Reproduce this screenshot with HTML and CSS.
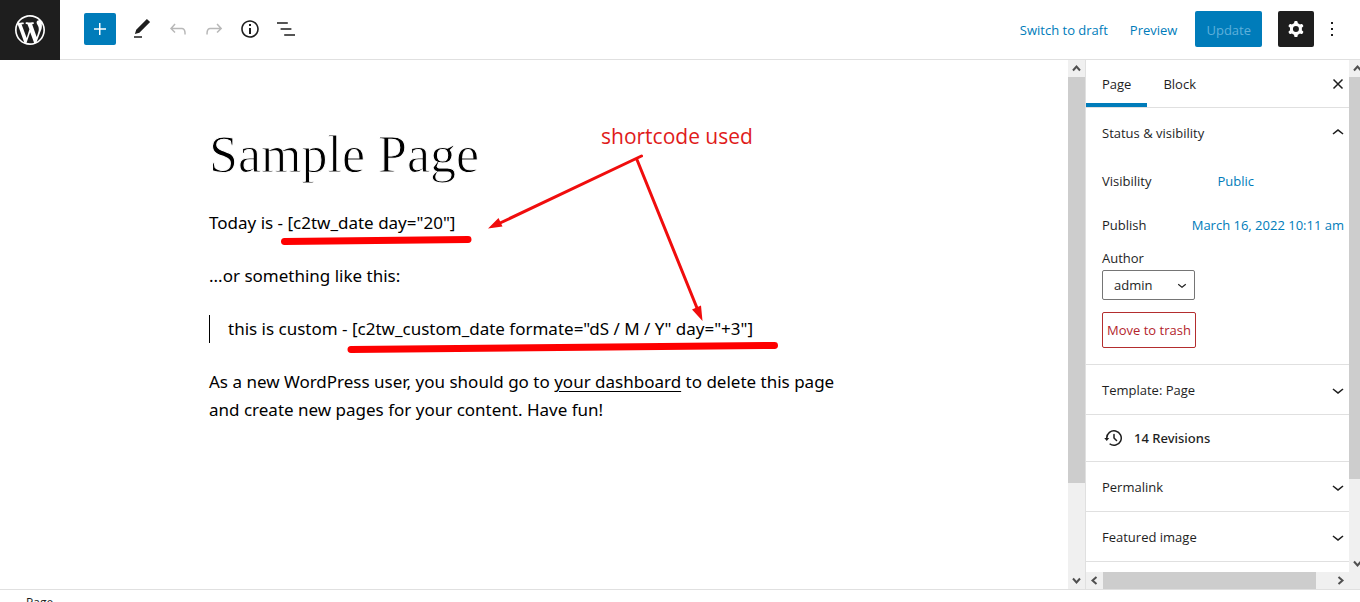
FILE: index.html
```html
<!DOCTYPE html>
<html lang="en">
<head>
<meta charset="utf-8">
<title>Edit Page</title>
<link rel="stylesheet" href="styles.css">
</head>
<body>
<div class="app">
  <header class="topbar">
    <a class="logo" href="#" aria-label="View pages"><svg width="36" height="36" viewBox="-2 -2 24 24"><path d="M20 10c0-5.51-4.49-10-10-10C4.48 0 0 4.49 0 10c0 5.52 4.48 10 10 10 5.51 0 10-4.48 10-10zM7.78 15.37L4.37 6.22c.55-.02 1.17-.08 1.17-.08.5-.06.44-1.13-.06-1.11 0 0-1.45.11-2.37.11-.18 0-.37 0-.58-.01C4.12 2.69 6.87 1.11 10 1.11c2.33 0 4.45.87 6.05 2.34-.68-.11-1.65.39-1.65 1.58 0 .74.45 1.36.9 2.1.35.61.55 1.36.55 2.46 0 1.49-1.4 5-1.4 5l-3.03-8.37c.54-.02.82-.17.82-.17.5-.05.44-1.25-.06-1.22 0 0-1.44.12-2.38.12-.87 0-2.33-.12-2.33-.12-.5-.03-.56 1.2-.06 1.22l.92.08 1.26 3.41zM17.41 10c.24-.64.74-1.87.43-4.25.7 1.29 1.05 2.71 1.05 4.25 0 3.29-1.73 6.24-4.4 7.78.97-2.59 1.94-5.2 2.92-7.78zM6.1 18.09C3.12 16.65 1.11 13.53 1.11 10c0-1.3.23-2.48.72-3.59C3.25 10.3 4.67 14.2 6.1 18.09zm4.03-6.63l2.58 6.98c-.86.29-1.76.45-2.71.45-.79 0-1.57-.11-2.29-.33.81-2.38 1.62-4.74 2.42-7.1z"/></svg></a>
    <div class="tools">
      <button class="tool tool-add" aria-label="Add block"><svg width="24" height="24" viewBox="0 0 24 24"><path d="M11 6h1.500v5.250H18v1.500h-5.500V18H11v-5.250H6v-1.500h5z"/></svg></button>
      <button class="tool" aria-label="Tools"><svg width="24" height="24" viewBox="0 0 24 24"><path d="M20.100 5.100L16.900 2 6.200 12.700l-1.300 4.400 4.500-1.300L20.100 5.100zM4 20.800h8v-1.500H4v1.500z"/></svg></button>
      <button class="tool tool-off" aria-label="Undo"><svg width="24" height="24" viewBox="0 0 24 24"><path d="M18.300 11.700c-.6-.6-1.400-.9-2.300-.9H6.700l2.900-3.300-1.100-1-4.500 5L8.500 16l1-1-2.700-2.700H16c.5 0 .9.2 1.300.5 1 1 1 3.400 1 4.500v.3h1.500v-.2c0-1.500 0-4.300-1.500-5.700z"/></svg></button>
      <button class="tool tool-off" aria-label="Redo"><svg width="24" height="24" viewBox="0 0 24 24"><path d="M15.600 6.500l-1.100 1 2.900 3.300H8c-.9 0-1.700.3-2.300.9-1.400 1.500-1.400 4.200-1.400 5.600v.2h1.500v-.3c0-1.100 0-3.500 1-4.500.3-.3.7-.5 1.300-.5h9.200L14.500 15l1.100 1.100 4.600-4.600-4.600-5z"/></svg></button>
      <button class="tool" aria-label="Details"><svg width="24" height="24" viewBox="0 0 24 24"><path d="M12 3.200c-4.800 0-8.800 3.900-8.800 8.800 0 4.800 3.900 8.800 8.800 8.800 4.800 0 8.800-3.900 8.800-8.800 0-4.800-4-8.800-8.800-8.800zm0 16c-4 0-7.200-3.300-7.200-7.200C4.800 8 8 4.800 12 4.800s7.200 3.300 7.200 7.200c0 4-3.200 7.200-7.200 7.200zM11 17h2v-6h-2v6zm0-8h2V7h-2v2z"/></svg></button>
      <button class="tool" aria-label="List view"><svg width="24" height="24" viewBox="0 0 24 24"><path d="M13.800 5.200H3v1.500h10.800V5.200zm-3.600 12v1.500H21v-1.500H10.200zm7.200-6H6.600v1.500h10.800v-1.500z"/></svg></button>
    </div>
    <div class="actions">
      <button class="text-action">Switch to draft</button>
      <button class="text-action">Preview</button>
      <button class="update">Update</button>
      <button class="settings" aria-label="Settings"><svg width="24" height="24" viewBox="0 0 24 24"><path fill-rule="evenodd" d="M10.289 4.836A1 1 0 0111.275 4h1.306a1 1 0 01.987.836l.244 1.466c.787.26 1.503.679 2.108 1.218l1.393-.522a1 1 0 011.216.437l.653 1.130a1 1 0 01-.23 1.273l-1.148.944a6.025 6.025 0 010 2.435l1.149.946a1 1 0 01.23 1.272l-.653 1.130a1 1 0 01-1.216.437l-1.394-.522c-.605.54-1.320.958-2.108 1.218l-.244 1.466a1 1 0 01-.987.836h-1.306a1 1 0 01-.986-.836l-.244-1.466a5.995 5.995 0 01-2.108-1.218l-1.394.522a1 1 0 01-1.217-.436l-.653-1.131a1 1 0 01.23-1.272l1.149-.946a6.026 6.026 0 010-2.435l-1.148-.944a1 1 0 01-.23-1.272l.653-1.131a1 1 0 011.217-.437l1.393.522a5.994 5.994 0 012.108-1.218l.244-1.466zM14.929 12a3 3 0 11-6 0 3 3 0 016 0z"/></svg></button>
      <button class="more" aria-label="Options"><svg width="24" height="24" viewBox="0 0 24 24"><path d="M13 19h-2v-2h2v2zm0-6h-2v-2h2v2zm0-6h-2V5h2v2z"/></svg></button>
    </div>
  </header>

  <div class="workspace">
    <main class="canvas">
      <article class="post">
        <h1>Sample Page</h1>
        <p>Today is - [c2tw_date day="20"]</p>
        <p>...or something like this:</p>
        <blockquote>this is custom - [c2tw_custom_date formate="dS / M / Y" day="+3"]</blockquote>
        <p>As a new WordPress user, you should go to <a href="#">your dashboard</a> to delete this page and create new pages for your content. Have fun!</p>
        <svg class="marks" width="650" height="360" viewBox="0 0 650 360" aria-hidden="true">
          <g fill="none" stroke="#fe0000" stroke-linecap="round">
            <path stroke-width="7" d="M75.500 181.500L259 179.500M142 289.500L565.500 285.500"/>
            <path stroke="#f00d0d" stroke-width="3" d="M432.500 96L290 163.500M427.500 98.500L488 248"/>
          </g>
          <path fill="#f00d0d" d="M279 168.500l10.500-10.500 4 8.500zM493.500 261l-10.500-11.500 9-4z"/>
        </svg>
        <span class="note">shortcode used</span>
      </article>
    </main>
    <div class="vscroll" aria-hidden="true">
      <svg width="17" height="17" viewBox="0 0 17 17"><path d="M5 10.500l3.500-4 3.500 4"/></svg>
      <div class="track"><div class="thumb thumb-canvas"></div></div>
      <svg width="17" height="17" viewBox="0 0 17 17"><path d="M5 6.500l3.500 4 3.500-4"/></svg>
    </div>
    <aside class="sidebar">
      <div class="sidebar-main">
        <div class="panels">
          <div class="tabs">
            <button class="tab tab-on">Page</button>
            <button class="tab">Block</button>
            <button class="close" aria-label="Close settings"><svg width="12" height="12" viewBox="0 0 12 12"><path d="M1.500 1.500l9 9M10.500 1.500l-9 9"/></svg></button>
          </div>
          <section class="status">
            <button class="row-toggle">Status &amp; visibility<svg width="24" height="24" viewBox="0 0 24 24"><path d="M6.500 12.400L12 8l5.500 4.400-.9 1.200L12 10l-4.500 3.600-1-1.200z"/></svg></button>
            <div class="field"><span>Visibility</span><a class="public" href="#">Public</a></div>
            <div class="field"><span>Publish</span><a href="#">March 16, 2022 10:11 am</a></div>
            <div class="author">
              <label for="author">Author</label>
              <div class="select-wrap">
                <select id="author"><option>admin</option></select>
                <svg width="18" height="18" viewBox="0 0 24 24"><path d="M17.500 11.600L12 16l-5.500-4.400.9-1.200L12 14l4.500-3.600 1 1.200z"/></svg>
              </div>
            </div>
            <button class="trash">Move to trash</button>
          </section>
          <button class="row">Template: Page<svg width="24" height="24" viewBox="0 0 24 24"><path d="M17.500 11.600L12 16l-5.500-4.400.9-1.200L12 14l4.500-3.600 1 1.200z"/></svg></button>
          <a class="revisions" href="#"><svg width="24" height="24" viewBox="0 0 24 24"><path d="M5.500 12h1.750l-2.500 3-2.500-3H4a8 8 0 113.134 6.350l.907-1.194A6.500 6.500 0 105.500 12zm9.530 1.970l-2.280-2.280V8.500a.75.75 0 00-1.500 0V12a.747.747 0 00.218.529l1.282-.84-1.280.842 2.500 2.500a.75.75 0 101.060-1.061z"/></svg>14 Revisions</a>
          <button class="row">Permalink<svg width="24" height="24" viewBox="0 0 24 24"><path d="M17.500 11.600L12 16l-5.500-4.400.9-1.200L12 14l4.500-3.600 1 1.200z"/></svg></button>
          <button class="row">Featured image<svg width="24" height="24" viewBox="0 0 24 24"><path d="M17.500 11.600L12 16l-5.500-4.400.9-1.200L12 14l4.500-3.600 1 1.200z"/></svg></button>
        </div>
        <div class="edge">
          <div class="vscroll" aria-hidden="true">
            <svg width="17" height="17" viewBox="0 0 17 17"><path d="M5 10.500l3.500-4 3.500 4"/></svg>
            <div class="track"><div class="thumb thumb-side"></div></div>
            <svg width="17" height="17" viewBox="0 0 17 17"><path d="M5 6.500l3.500 4 3.500-4"/></svg>
          </div>
        </div>
      </div>
      <div class="hscroll" aria-hidden="true">
        <svg width="17" height="17" viewBox="0 0 17 17"><path d="M10.500 5l-4 3.500 4 3.500"/></svg>
        <div class="htrack"><div class="hthumb"></div></div>
        <svg width="17" height="17" viewBox="0 0 17 17"><path d="M6.500 5l4 3.500-4 3.500"/></svg>
      </div>
    </aside>
  </div>
  <footer class="breadcrumb">Page</footer>
</div>
</body>
</html>
```
FILE: styles.css
```css
* { box-sizing: border-box; }

body {
  margin: 0;
  background: #fff;
  color: #1e1e1e;
  font: 13px/18px "Open Sans", "Noto Sans", sans-serif;
}

button, select {
  margin: 0;
  padding: 0;
  border: 0;
  background: none;
  color: inherit;
  font: inherit;
}

a { color: #007cba; text-decoration: none; }
svg { display: block; flex: none; fill: currentColor; }

.app { display: flex; flex-direction: column; height: 100vh; overflow: hidden; }

/* Top bar */
.topbar { display: flex; flex: none; height: 60px; border-bottom: 1px solid #e0e0e0; }
.logo {
  display: flex;
  align-items: center;
  justify-content: center;
  width: 60px;
  height: 60px;
  background: #1e1e1e;
  color: #fff;
}
.tools { display: flex; align-items: center; gap: 4px; padding: 0 0 2px 24px; }
.tool { display: flex; flex: none; align-items: center; justify-content: center; width: 32px; height: 32px; }
.tool-add { margin-right: 6px; border-radius: 2px; background: #007cba; color: #fff; }
.tool-off { color: #b8b8b8; }
.actions { display: flex; align-items: center; margin-left: auto; padding: 0 16px 2px 0; }
.text-action { height: 32px; padding-top: 2px; margin-right: 22px; color: #007cba; }
.text-action + .text-action { margin-right: 18px; }
.update { height: 36px; padding: 2px 11px 0; border-radius: 2px; background: #007cba; color: #5eb0da; }
.settings {
  display: flex;
  align-items: center;
  justify-content: center;
  width: 36px;
  height: 36px;
  margin: 0 6px 0 16px;
  border-radius: 2px;
  background: #1e1e1e;
  color: #fff;
}

/* Editor */
.workspace { display: flex; flex: 1; min-height: 0; }
.canvas { flex: 1; min-width: 0; overflow: hidden; }
.post {
  position: relative;
  max-width: 650px;
  margin: 0 auto;
  padding-top: 63px;
  color: #000;
  font-family: "Noto Sans", "Open Sans", sans-serif;
  font-size: 17px;
  line-height: 28px;
}
.post h1 {
  margin: 0 0 22px;
  font: 400 52px/64px "Liberation Serif", serif;
  -webkit-text-stroke: 1px #fff;
}
.post p { margin: 0 0 25px; }
.post a { color: inherit; text-decoration: underline; text-underline-offset: 3px; }
.post blockquote { margin: 0 0 25px; padding-left: 18px; border-left: 1px solid #000; }
.marks { position: absolute; top: 0; left: 0; }
.note {
  position: absolute;
  top: 62px;
  left: 392px;
  color: #e01b1b;
  font-family: "Open Sans", sans-serif;
  font-size: 21px;
  white-space: nowrap;
}

/* Scrollbars */
.vscroll { display: flex; flex: none; flex-direction: column; width: 17px; background: #f0f0f0; }
.vscroll svg, .hscroll svg { fill: none; stroke: #505050; stroke-width: 2; }
.track { flex: 1; }
.thumb { background: #cdcdcd; }
.thumb-canvas { height: 82%; }
.thumb-side { height: 84%; }
.hscroll { display: flex; flex: none; padding-right: 11px; background: #f0f0f0; }
.htrack { flex: 1; }
.hthumb { width: 93%; height: 100%; background: #cdcdcd; }

/* Sidebar */
.sidebar {
  display: flex;
  flex: none;
  flex-direction: column;
  width: 275px;
  border-left: 1px solid #e0e0e0;
}
.sidebar-main { display: flex; flex: 1; min-height: 0; }
.panels { flex: 1; min-width: 0; overflow: hidden; }
.edge { display: flex; width: 11px; overflow: hidden; }
.tabs { display: flex; height: 48px; border-bottom: 1px solid #e0e0e0; }
.tab { padding: 0 16px; }
.tab-on { box-shadow: inset 0 -4px 0 #007cba; }
.close { margin-left: auto; padding: 0 5px; }
.close svg { stroke: #1e1e1e; stroke-width: 1.5; }
.status { padding: 0 5px 16px 16px; border-bottom: 1px solid #e0e0e0; }
.row, .row-toggle { display: flex; align-items: center; justify-content: space-between; width: 100%; }
.row-toggle { height: 51px; padding-bottom: 2px; }
.row svg, .row-toggle svg { margin-right: -6px; }
.row { height: 50px; padding: 0 5px 0 16px; border-bottom: 1px solid #e0e0e0; }
.field { display: flex; align-items: center; justify-content: space-between; height: 44px; white-space: nowrap; }
.public { margin-right: 90px; }
.author { display: flex; flex-direction: column; align-items: flex-start; gap: 3px; padding-top: 2px; }
.select-wrap { position: relative; width: 93px; }
.select-wrap select {
  display: block;
  width: 100%;
  height: 30px;
  padding: 0 24px 0 11px;
  border: 1px solid #757575;
  border-radius: 2px;
  appearance: none;
}
.select-wrap svg { position: absolute; top: 6px; right: 4px; pointer-events: none; }
.trash {
  height: 36px;
  margin-top: 12px;
  padding: 0 4px;
  border: 1px solid #b32d2e;
  border-radius: 2px;
  color: #b3242c;
}
.revisions {
  display: flex;
  align-items: center;
  gap: 8px;
  height: 47px;
  padding-left: 16px;
  border-bottom: 1px solid #e0e0e0;
  color: #1e1e1e;
  font-family: "Noto Sans", "Open Sans", sans-serif;
  font-weight: 500;
}

/* Block breadcrumb */
.breadcrumb { flex: none; height: 13px; padding: 4px 26px 0; overflow: hidden; border-top: 1px solid #e0e0e0; font-size: 12px; }
```
